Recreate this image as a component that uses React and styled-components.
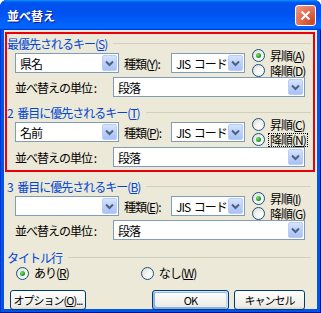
import React from 'react';
import styled, { createGlobalStyle, css } from 'styled-components';

const GlobalStyle = createGlobalStyle`
  html, body {
    margin: 0;
    padding: 0;
    background: #ffffff;
  }
  body {
    font-family: "Noto Sans CJK JP", "Noto Sans", sans-serif;
    font-size: 12px;
    color: #000;
  }
`;

const Window = styled.div`
  width: 321px;
  height: 313px;
  box-sizing: border-box;
  display: flex;
  flex-direction: column;
  background: #0055e5;
  border-radius: 7px 7px 0 0;
  overflow: hidden;
  box-shadow: inset -1px -1px #00138c, inset 1px 1px #0831d9;
`;

const TitleBar = styled.div`
  height: 30px;
  flex: none;
  display: flex;
  align-items: center;
  justify-content: space-between;
  padding: 0 5px 0 7px;
  background: linear-gradient(
    180deg,
    #0997ff,
    #0053ee 8%,
    #0050ee 40%,
    #0066ff 88%,
    #0066ff 93%,
    #005bff 95%,
    #003dd7 96%,
    #003dd7
  );
`;

const Title = styled.span`
  color: #fff;
  font-weight: bold;
  font-size: 12px;
  text-shadow: 1px 1px #0f1089;
  margin-top: 1px;
`;

const CloseButton = styled.span`
  width: 21px;
  height: 21px;
  box-sizing: border-box;
  border: 1px solid #fff;
  border-radius: 3px;
  display: flex;
  align-items: center;
  justify-content: center;
  background: radial-gradient(circle at 85% 85%, #cc4625 0%, #e37055 55%, #f0a08a 100%);
`;

const Client = styled.div`
  flex: 1;
  min-height: 0;
  margin: 0 4px 4px;
  background: #ece9d8;
  display: flex;
  flex-direction: column;
  padding-top: 2px;
`;

const Frame = styled.div`
  width: 310px;
  box-sizing: border-box;
  margin-left: 1px;
  border: 2px solid ${p => (p.$marked ? '#e8000b' : 'transparent')};
  padding-bottom: ${p => p.$pb || 0}px;
  display: flex;
  flex-direction: column;
`;

const GroupHead = styled.div`
  display: flex;
  align-items: center;
  height: 14px;
  margin-top: ${p => p.$mt}px;
  color: #0046d5;
  white-space: nowrap;
  letter-spacing: -1px;
  word-spacing: 3px;

  &::after {
    content: '';
    flex: 1;
    height: 1px;
    background: #d0d0bf;
    margin: 1px 2px 0 6px;
  }
`;

const U = styled.span`
  text-decoration: underline;
`;

const Row = styled.div`
  display: flex;
  align-items: center;
  height: ${p => p.$h || 20}px;
  padding-left: 8px;
  margin-top: ${p => p.$mt}px;
`;

const Label = styled.span`
  width: ${p => p.$w}px;
  margin-left: ${p => p.$ml || 0}px;
  flex: none;
  white-space: nowrap;
  letter-spacing: -1px;
`;

const ComboBox = styled.div`
  width: ${p => p.$w}px;
  height: 20px;
  flex: none;
  box-sizing: border-box;
  border: 1px solid #7f9db9;
  background: #fff;
  display: flex;
  align-items: center;
  padding: 1px;
`;

const ComboText = styled.span`
  flex: 1;
  padding-left: 3px;
  white-space: nowrap;
  overflow: hidden;
  letter-spacing: -1px;
  word-spacing: 2px;
`;

const DropButton = styled.span`
  width: 15px;
  height: 16px;
  flex: none;
  box-sizing: border-box;
  border: 1px solid #b9cdf6;
  border-radius: 2px;
  background: linear-gradient(180deg, #d6e3fd 0%, #b8cdf8 60%, #a9c1f5 100%);
  display: flex;
  align-items: center;
  justify-content: center;
`;

const RadioGroup = styled.div`
  height: 30px;
  margin-left: 7px;
  display: flex;
  flex-direction: column;
`;

const RadioItem = styled.label`
  display: flex;
  align-items: center;
  height: ${p => p.$h || 15}px;
  line-height: 13px;
  margin-left: ${p => p.$ml || 0}px;
  white-space: nowrap;
  letter-spacing: -1px;
`;

const Circle = styled.span`
  width: 13px;
  height: 13px;
  flex: none;
  box-sizing: border-box;
  border-radius: 50%;
  border: 1px solid #1c5180;
  background: radial-gradient(circle at 70% 70%, #ffffff 0%, #f2f2ee 45%, #d9d9d0 100%);
  display: flex;
  align-items: center;
  justify-content: center;
  margin-right: 3px;

  ${p =>
    p.$on &&
    css`
      &::after {
        content: '';
        width: 5px;
        height: 5px;
        border-radius: 50%;
        background: radial-gradient(circle at 35% 35%, #7fe07f 0%, #21a121 60%, #127012 100%);
      }
    `}
`;

const RadioText = styled.span`
  padding: 0 1px;
  line-height: 12px;
  border: 1px dotted ${p => (p.$focus ? '#000' : 'transparent')};
`;

const ButtonRow = styled.div`
  display: flex;
  align-items: center;
  margin-top: 7px;
  padding: 0 12px 0 6px;
`;

const Button = styled.button`
  width: ${p => p.$w}px;
  height: 20px;
  margin-left: ${p => p.$ml || 0}px;
  box-sizing: border-box;
  border: 1px solid #003c74;
  border-radius: 3px;
  background: linear-gradient(180deg, #fff, #ecebe6 86%, #d6d0c5);
  font-family: "Noto Sans CJK JP", "Noto Sans", sans-serif;
  font-size: 11px;
  letter-spacing: -1px;
  white-space: nowrap;
  padding: 0;
  color: #000;
  ${p =>
    p.$default &&
    css`
      box-shadow: inset -1px 1px #cee7ff, inset 1px 2px #98b8ea, inset -2px 2px #bcd4f6,
        inset 1px -1px #89ade4, inset 2px -2px #89ade4;
    `}
`;

const Spacer = styled.div`
  flex: 1;
`;

const Chevron = () => (
  <svg width="9" height="7" viewBox="0 0 9 7">
    <path d="M1 1.5 L4.5 5 L8 1.5" fill="none" stroke="#4d6185" strokeWidth="2" />
  </svg>
);

const Combo = ({ w, value }) => (
  <ComboBox $w={w}>
    <ComboText>{value}</ComboText>
    <DropButton>
      <Chevron />
    </DropButton>
  </ComboBox>
);

const Radio = ({ on, focus, children, h, ml }) => (
  <RadioItem $h={h} $ml={ml}>
    <Circle $on={on} />
    <RadioText $focus={focus}>{children}</RadioText>
  </RadioItem>
);

const SortKey = ({ keyValue, typeKey, ascKey, descKey, desc, focusDesc }) => (
  <Row $mt={3}>
    <Combo w={104} value={keyValue} />
    <Label $w={47} $ml={5}>
      種類(<U>{typeKey}</U>):
    </Label>
    <Combo w={74} value="JIS コード" />
    <RadioGroup>
      <Radio on={!desc}>
        昇順(<U>{ascKey}</U>)
      </Radio>
      <Radio on={desc} focus={focusDesc}>
        降順(<U>{descKey}</U>)
      </Radio>
    </RadioGroup>
  </Row>
);

const UnitRow = ({ mt }) => (
  <Row $mt={mt}>
    <Label $w={98}>並べ替えの単位 :</Label>
    <Combo w={192} value="段落" />
  </Row>
);

export default function App() {
  return (
    <>
      <GlobalStyle />
      <Window>
        <TitleBar>
          <Title>並べ替え</Title>
          <CloseButton>
            <svg width="11" height="11" viewBox="0 0 11 11">
              <path d="M1.5 1.5 L9.5 9.5 M9.5 1.5 L1.5 9.5" stroke="#fff" strokeWidth="2" />
            </svg>
          </CloseButton>
        </TitleBar>
        <Client>
          <Frame $marked $pb={3}>
            <GroupHead $mt={2}>
              最優先されるキー(<U>S</U>)
            </GroupHead>
            <SortKey keyValue="県名" typeKey="Y" ascKey="A" descKey="D" />
            <UnitRow mt={4} />
            <GroupHead $mt={8}>
              2 番目に優先されるキー(<U>T</U>)
            </GroupHead>
            <SortKey keyValue="名前" typeKey="P" ascKey="C" descKey="N" desc focusDesc />
            <UnitRow mt={5} />
          </Frame>
          <Frame>
            <GroupHead $mt={5}>
              3 番目に優先されるキー(<U>B</U>)
            </GroupHead>
            <SortKey keyValue="" typeKey="E" ascKey="I" descKey="G" />
            <UnitRow mt={4} />
            <GroupHead $mt={10}>タイトル行</GroupHead>
            <Row $mt={1} $h={16}>
              <Radio on h={16} ml={1}>
                あり(<U>R</U>)
              </Radio>
              <Radio h={16} ml={70}>
                なし(<U>W</U>)
              </Radio>
            </Row>
          </Frame>
          <ButtonRow>
            <Button $w={76}>
              オプション(<U>O</U>)...
            </Button>
            <Spacer />
            <Button $w={77} $default>
              OK
            </Button>
            <Button $w={71} $ml={5}>
              キャンセル
            </Button>
          </ButtonRow>
        </Client>
      </Window>
    </>
  );
}
